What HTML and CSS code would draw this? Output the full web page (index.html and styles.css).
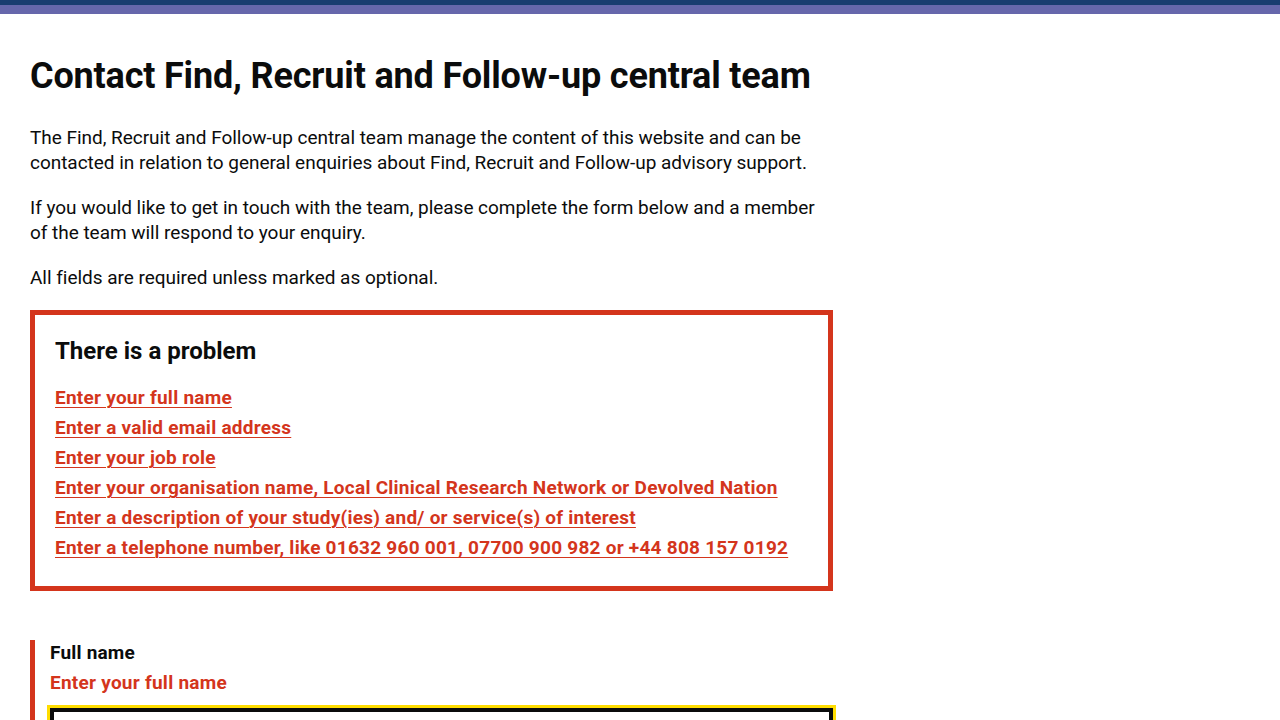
FILE: index.html
```html
<!DOCTYPE html>
<html lang="en">
<head>
<meta charset="utf-8">
<title>Contact Find, Recruit and Follow-up central team</title>
<link rel="stylesheet" href="styles.css">
</head>
<body>
<header class="topbar"><div class="topbar-dark"></div><div class="topbar-accent"></div></header>
<main class="main">
  <div class="column">
    <h1 class="title">Contact Find, Recruit and Follow-up central team</h1>
    <p class="body">The Find, Recruit and Follow-up central team manage the content of this website and can be contacted in relation to general enquiries about Find, Recruit and Follow-up advisory support.</p>
    <p class="body">If you would like to get in touch with the team, please complete the form below and a member of the team will respond to your enquiry.</p>
    <p class="body">All fields are required unless marked as optional.</p>

    <div class="error-summary" role="alert">
      <h2 class="error-summary-title">There is a problem</h2>
      <ul class="error-list">
        <li><a href="#name">Enter your full name</a></li>
        <li><a href="#email">Enter a valid email address</a></li>
        <li><a href="#role">Enter your job role</a></li>
        <li><a href="#org">Enter your organisation name, Local Clinical Research Network or Devolved Nation</a></li>
        <li><a href="#desc">Enter a description of your study(ies) and/ or service(s) of interest</a></li>
        <li><a href="#phone">Enter a telephone number, like 01632 960 001, 07700 900 982 or +44 808 157 0192</a></li>
      </ul>
    </div>

    <div class="form-group form-group-error">
      <label class="label" for="name">Full name</label>
      <p class="error-message">Enter your full name</p>
      <input class="input input-focus" id="name" type="text">
    </div>
  </div>
</main>
</body>
</html>
```
FILE: styles.css
```css
* { box-sizing: border-box; }
html, body { margin: 0; padding: 0; background: #fff; }
body {
  font-family: Roboto, "Noto Sans", Arial, sans-serif;
  color: #0b0c0c;
}
.topbar { display: flex; flex-direction: column; }
.topbar-dark { height: 5px; background: #193d70; }
.topbar-accent { height: 9px; background: #6667ab; }

.main { padding: 42px 30px 0 30px; }
.column { width: 803px; }

.title {
  font-size: 36px;
  line-height: 40px;
  font-weight: 700;
  letter-spacing: -0.17px;
  margin: 0 0 29px 0;
}
.body {
  font-size: 19px;
  line-height: 25px;
  margin: 0 0 20px 0;
  letter-spacing: -0.03px;
}

.error-summary {
  border: 5px solid #d4351c;
  padding: 21px 20px 21px 20px;
  margin-bottom: 49px;
}
.error-summary-title {
  font-size: 24px;
  line-height: 30px;
  font-weight: 700;
  margin: 0 0 19px 0;
}
.error-list { list-style: none; margin: 0; padding: 0; }
.error-list li { font-size: 19px; line-height: 25px; margin-bottom: 5px; }
.error-list a {
  color: #d4351c;
  font-weight: 700;
  letter-spacing: 0.25px;
  text-decoration: underline;
  text-decoration-thickness: 1px;
  text-underline-offset: 3px;
}

.form-group-error {
  border-left: 5px solid #d4351c;
  padding-left: 15px;
}
.label {
  display: block;
  font-size: 19px;
  line-height: 25px;
  font-weight: 700;
  margin-bottom: 5px;
  letter-spacing: 0.2px;
}
.error-message {
  color: #d4351c;
  font-size: 19px;
  line-height: 25px;
  font-weight: 700;
  letter-spacing: 0.25px;
  margin: 0 0 13px 0;
}
.input {
  display: block;
  width: 100%;
  height: 40px;
  border: 4px solid #0b0c0c;
  font: inherit;
  font-size: 19px;
}
.input-focus { outline: 3px solid #ffdd00; outline-offset: 0; }
```
